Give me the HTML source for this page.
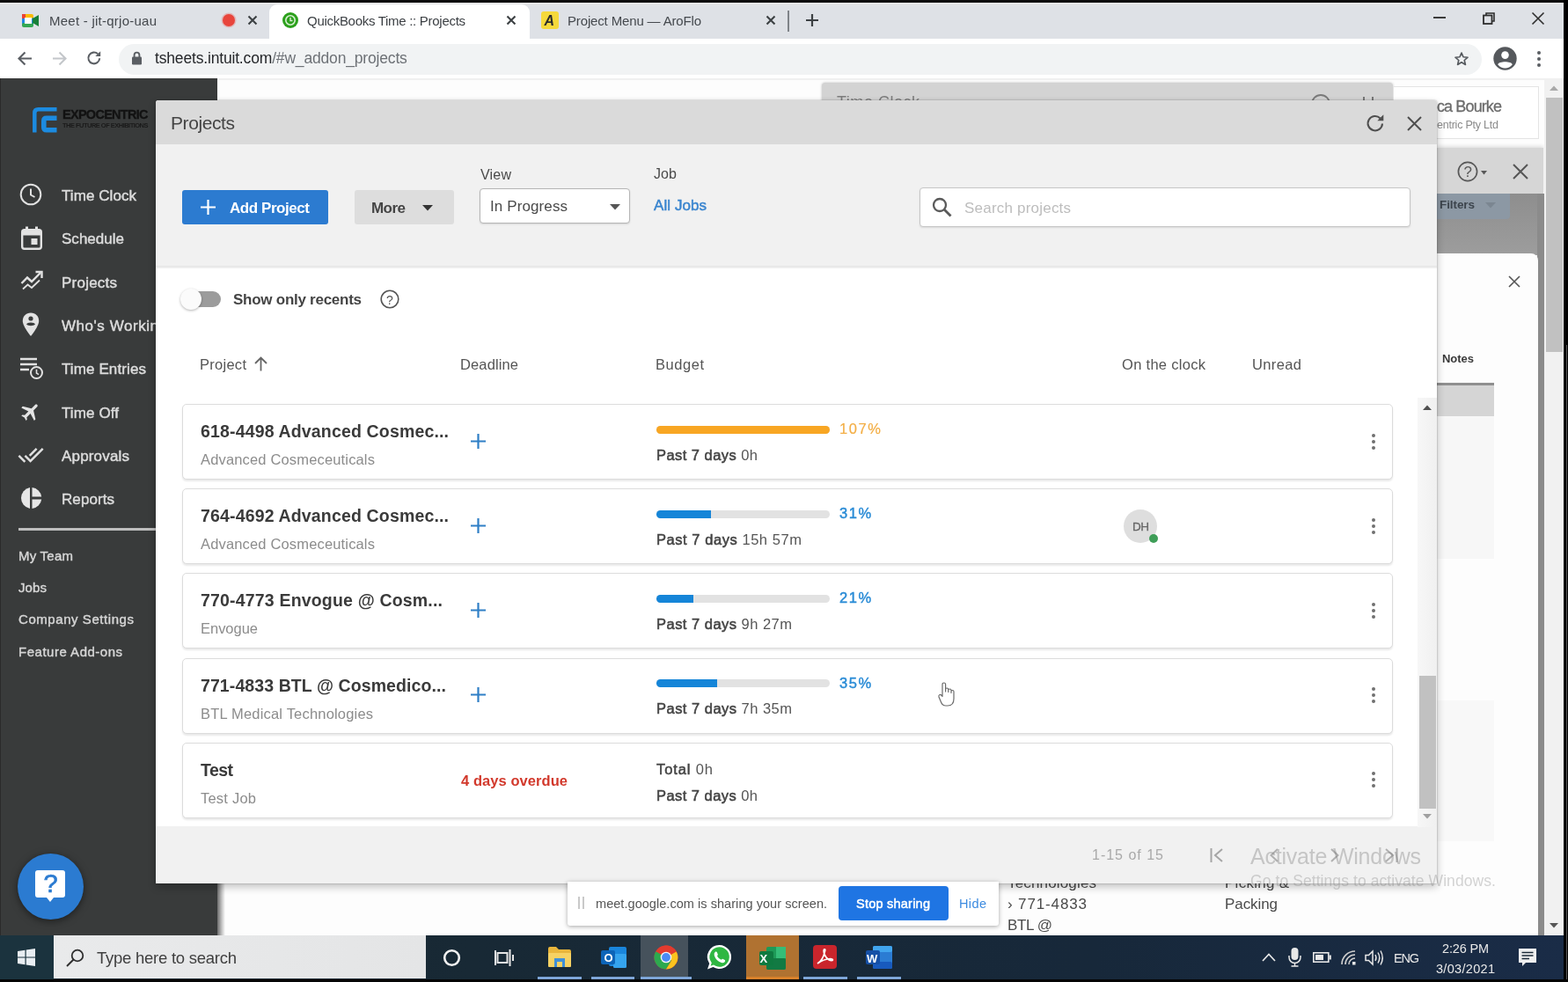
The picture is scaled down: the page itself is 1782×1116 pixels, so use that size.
<!DOCTYPE html>
<html lang="en">
<head>
<meta charset="utf-8">
<title>QuickBooks Time :: Projects</title>
<style>
*{box-sizing:border-box;margin:0;padding:0}
html,body{width:1782px;height:1116px;overflow:hidden;background:#000}
body{font-family:"Liberation Sans",Arial,sans-serif;color:#404040;position:relative}
#screen{position:absolute;left:0;top:0;width:1782px;height:1116px;overflow:hidden;background:#000}
#blur{position:absolute;left:0;top:0;width:1782px;height:1116px;filter:blur(0.7px)}
#screen *{position:absolute}
#screen span.t b,#screen span.t span,#screen span.t i{position:static}
.t{white-space:nowrap;line-height:1}
svg{overflow:visible}
.r{display:block}
</style>
</head>
<body>
<div id="screen"><div id="blur">

<!-- chrome -->
<div class="r" style="left:0;top:0;width:1782px;height:3px;background:#0a0a0a"></div>
<div class="r" style="left:0;top:3px;width:1777px;height:41px;background:#dee1e6"></div>
<div class="r" style="left:0;top:3px;width:1777px;height:5px;background:linear-gradient(#e6e6e6,rgba(222,225,230,0))"></div>
<!-- active tab -->
<div class="r" style="left:306px;top:5px;width:296px;height:39px;background:#fff;border-radius:9px 9px 0 0"></div>
<div class="r" style="left:0;top:44px;width:1777px;height:45px;background:#fff"></div>
<div class="r" style="left:135px;top:50px;width:1549px;height:35px;border-radius:18px;background:#f1f3f4"></div>
<!-- tab 1 : Meet -->
<svg style="left:25px;top:15px" width="20" height="17" viewBox="0 0 20 17">
 <rect x="0" y="3" width="13" height="12" rx="2" fill="#1e88e5"/>
 <rect x="0" y="1" width="13" height="5" rx="2" fill="#fbbc04"/>
 <rect x="0" y="11" width="13" height="5" rx="2" fill="#34a853"/>
 <rect x="0" y="1" width="4" height="5" fill="#ea4335"/>
 <rect x="3" y="5" width="8" height="7" fill="#fff"/>
 <path d="M12 6 L19 2 V15 L12 11Z" fill="#188038"/>
</svg>
<span class="t" style="left:56px;top:15.5px;font-size:15px;letter-spacing:0.25px;color:#45494e">Meet - jit-qrjo-uau</span>
<div class="r" style="left:253px;top:16px;width:14px;height:14px;border-radius:7px;background:#e8453c;box-shadow:0 0 0 1.5px rgba(232,69,60,.25)"></div>
<svg style="left:281px;top:17px" width="12" height="12" viewBox="0 0 12 12"><path d="M1.5 1.5 L10.5 10.5 M10.5 1.5 L1.5 10.5" stroke="#3c4043" stroke-width="2.1" fill="none"/></svg>
<!-- tab 2 : QuickBooks -->
<svg style="left:321px;top:14px" width="18" height="18" viewBox="0 0 18 18"><circle cx="9" cy="9" r="9" fill="#2ca01c"/><circle cx="9" cy="9" r="5.2" fill="none" stroke="#d8f0d4" stroke-width="1.6"/><path d="M9 6 V9.5 H11.5" stroke="#d8f0d4" stroke-width="1.4" fill="none"/></svg>
<span class="t" style="left:349px;top:15.5px;font-size:15px;letter-spacing:-0.29px;color:#3b3f43">QuickBooks Time :: Projects</span>
<svg style="left:575px;top:17px" width="12" height="12" viewBox="0 0 12 12"><path d="M1.5 1.5 L10.5 10.5 M10.5 1.5 L1.5 10.5" stroke="#3c4043" stroke-width="2.1" fill="none"/></svg>
<!-- tab 3 : AroFlo -->
<div class="r" style="left:615px;top:13px;width:20px;height:20px;border-radius:3px;background:#f6d93b"></div>
<span class="t" style="left:618.5px;top:15.5px;font-size:16px;color:#2b2b2b;font-weight:bold;font-style:italic">A</span>
<span class="t" style="left:645px;top:15.5px;font-size:15px;letter-spacing:-0.15px;color:#45494e">Project Menu — AroFlo</span>
<svg style="left:870px;top:17px" width="12" height="12" viewBox="0 0 12 12"><path d="M1.5 1.5 L10.5 10.5 M10.5 1.5 L1.5 10.5" stroke="#3c4043" stroke-width="2.1" fill="none"/></svg>
<div class="r" style="left:895px;top:12px;width:2px;height:24px;background:#7f8388"></div>
<svg style="left:916px;top:16px" width="14" height="14" viewBox="0 0 14 14"><path d="M7 0 V14 M0 7 H14" stroke="#3c4043" stroke-width="2.2" fill="none"/></svg>
<!-- window controls -->
<div class="r" style="left:1629px;top:19px;width:14px;height:2px;background:#3a3a3a"></div>
<svg style="left:1685px;top:14px" width="14" height="14" viewBox="0 0 14 14"><rect x="1" y="3.5" width="9.5" height="9.5" fill="none" stroke="#2d2d2d" stroke-width="1.8"/><path d="M4 3 V1 H13 V10 H11" fill="none" stroke="#2d2d2d" stroke-width="1.6"/></svg>
<svg style="left:1741px;top:14px" width="14" height="14" viewBox="0 0 14 14"><path d="M0.5 0.5 L13.5 13.5 M13.5 0.5 L0.5 13.5" stroke="#2d2d2d" stroke-width="1.6" fill="none"/></svg>
<!-- nav buttons -->
<svg style="left:20px;top:58px" width="17" height="17" viewBox="0 0 17 17"><path d="M16 8.5 H2 M8.5 1.5 L1.5 8.5 L8.5 15.5" stroke="#5a5e63" stroke-width="2.1" fill="none"/></svg>
<svg style="left:59px;top:58px" width="17" height="17" viewBox="0 0 17 17"><path d="M1 8.5 H15 M8.5 1.5 L15.5 8.5 L8.5 15.5" stroke="#c3c6ca" stroke-width="2.1" fill="none"/></svg>
<svg style="left:98px;top:57px" width="18" height="18" viewBox="0 0 18 18"><path d="M15.2 9.3 A6.4 6.4 0 1 1 13.2 4.3" stroke="#5a5e63" stroke-width="2.1" fill="none"/><path d="M16.2 1.2 V7 H10.4Z" fill="#5a5e63"/></svg>
<!-- lock -->
<svg style="left:149px;top:58px" width="13" height="16" viewBox="0 0 13 16"><rect x="1" y="6.5" width="11" height="9" rx="1.2" fill="#5a5e63"/><path d="M3.6 7 V4.5 A2.9 2.9 0 0 1 9.4 4.5 V7" stroke="#5a5e63" stroke-width="1.9" fill="none"/></svg>
<span class="t" style="left:176px;top:58.2px;font-size:17.5px;letter-spacing:-0.17px;color:#25272a">tsheets.intuit.com<span style="color:#6d7176">/#w_addon_projects</span></span>
<!-- star -->
<svg style="left:1652px;top:58px" width="18" height="18" viewBox="0 0 24 24"><path d="M12 2.8 L14.7 9 L21.4 9.6 L16.3 14 L17.9 20.6 L12 17.1 L6.1 20.6 L7.7 14 L2.6 9.6 L9.3 9Z" fill="none" stroke="#55595e" stroke-width="2.2" stroke-linejoin="round"/></svg>
<!-- profile -->
<svg style="left:1697px;top:53px" width="27" height="27" viewBox="0 0 27 27"><circle cx="13.5" cy="13.5" r="13.2" fill="#55585c"/><circle cx="13.5" cy="9.6" r="4.3" fill="#fff"/><path d="M5.2 20.2 C7 16.4 20 16.4 21.8 20.2 C19.5 23.3 16.6 24.4 13.5 24.4 C10.4 24.4 7.5 23.3 5.2 20.2Z" fill="#fff"/></svg>
<div class="r" style="left:1747px;top:58px;width:4px;height:4px;border-radius:2px;background:#5a5e63"></div>
<div class="r" style="left:1747px;top:65px;width:4px;height:4px;border-radius:2px;background:#5a5e63"></div>
<div class="r" style="left:1747px;top:72px;width:4px;height:4px;border-radius:2px;background:#5a5e63"></div>
<!-- right black edge + bottom -->
<div class="r" style="left:1777px;top:0;width:5px;height:1116px;background:#000"></div>
<div class="r" style="left:1780px;top:392px;width:1px;height:724px;background:#5c5c5c"></div>

<!-- page -->
<!-- page base -->
<div class="r" style="left:0;top:89px;width:1777px;height:974px;background:#fdfdfd"></div>
<div class="r" style="left:0;top:89px;width:1777px;height:2px;background:#f0f0f0"></div>
<!-- sidebar -->
<div class="r" style="left:0;top:89px;width:247px;height:974px;background:#393b3b"></div>
<div class="r" style="left:0;top:89px;width:1px;height:974px;background:#2a2a2a"></div>
<div class="r" style="left:247px;top:1003px;width:9px;height:60px;background:linear-gradient(90deg,#6d6d6d,#c9c9c9 60%,#fdfdfd)"></div>
<!-- logo -->
<svg style="left:37px;top:121.5px" width="28" height="29" viewBox="0 0 28 29">
 <path d="M2.300 28.500 V6.500 Q2.300 2.300 6.500 2.300 H27.500" stroke="#1c8be0" stroke-width="4.500" fill="none"/>
 <path d="M27.500 12.200 H15.800 Q12.800 12.200 12.800 15.200 V22.700 Q12.800 25.700 15.800 25.700 H27.500" stroke="#1c8be0" stroke-width="5.600" fill="none"/>
</svg>
<span class="t" style="left:71px;top:122.8px;font-size:14.5px;letter-spacing:-0.72px;color:#121212;font-weight:bold;-webkit-text-stroke:0.3px #121212">EXPOCENTRIC</span>
<span class="t" style="left:71px;top:138.8px;font-size:7.500px;letter-spacing:-0.52px;color:#1a1a1a;font-weight:bold">THE FUTURE OF EXHIBITIONS</span>
<!-- nav icons -->
<svg style="left:22px;top:208px" width="26" height="26" viewBox="0 0 26 26"><circle cx="13" cy="13" r="11.3" fill="none" stroke="#e2e2e2" stroke-width="2"/><path d="M13 6.5 V13.5 L17.5 16" stroke="#e2e2e2" stroke-width="2" fill="none"/></svg>
<svg style="left:24px;top:257px" width="24" height="27" viewBox="0 0 24 27"><rect x="1.2" y="4.2" width="21.6" height="21.6" rx="2.5" fill="none" stroke="#e2e2e2" stroke-width="2.4"/><rect x="1" y="4" width="22" height="6.5" fill="#e2e2e2"/><rect x="5" y="0.5" width="3" height="6" fill="#e2e2e2"/><rect x="16" y="0.5" width="3" height="6" fill="#e2e2e2"/><rect x="11.5" y="14" width="7" height="7" fill="#e2e2e2"/></svg>
<svg style="left:23px;top:307px" width="27" height="24" viewBox="0 0 27 24"><path d="M1.5 15 L8 8.5 L13 13 L23 3" stroke="#e2e2e2" stroke-width="2.4" fill="none"/><path d="M17.5 2 H24.5 V9" stroke="#e2e2e2" stroke-width="2.4" fill="none"/><path d="M3 21.5 L8.5 16.5 L13 20 L22 11.5" stroke="#e2e2e2" stroke-width="1.8" fill="none"/></svg>
<svg style="left:25px;top:355px" width="20" height="28" viewBox="0 0 20 28"><path d="M10 0.5 C4.5 0.5 0.8 4.5 0.8 9.8 C0.8 16 10 27 10 27 C10 27 19.2 16 19.2 9.8 C19.2 4.5 15.5 0.5 10 0.5Z" fill="#e2e2e2"/><circle cx="10" cy="7" r="2.6" fill="#393b3b"/><path d="M5 13.5 C6 10.8 14 10.8 15 13.5 C13 15.8 7 15.8 5 13.5Z" fill="#393b3b"/></svg>
<svg style="left:22px;top:405px" width="28" height="27" viewBox="0 0 28 27"><path d="M1 3 H20 M1 9 H20 M1 15 H11" stroke="#e2e2e2" stroke-width="2.4" fill="none"/><circle cx="19.5" cy="18.5" r="6.5" fill="none" stroke="#e2e2e2" stroke-width="2"/><path d="M19.5 14.8 V19 L22 20.6" stroke="#e2e2e2" stroke-width="1.6" fill="none"/></svg>
<svg style="left:22px;top:455px" width="26" height="26" viewBox="0 0 24 24"><g transform="rotate(45 12 12)"><path d="M21 16v-2l-8-5V3.500c0-.830-.670-1.500-1.500-1.500S10 2.670 10 3.500V9l-8 5v2l8-2.500V19l-2 1.500V22l3.500-1 3.500 1v-1.500L13 19v-5.500l8 2.500z" fill="#e4e4e4"/></g></svg>
<svg style="left:20px;top:502px" width="30" height="30" viewBox="0 0 24 24"><path d="M18 7l-1.410-1.410-6.340 6.340 1.410 1.410L18 7zm4.240-1.410L11.660 16.170 7.480 12l-1.410 1.410L11.660 19l12-12-1.420-1.410zM.410 13.410L6 19l1.410-1.410L1.830 12 .410 13.410z" fill="#e0e0e0"/></svg>
<svg style="left:22px;top:553px" width="26" height="26" viewBox="0 0 26 26"><path d="M12 1 A12.2 12.2 0 0 0 12 25Z" fill="#e6e6e6"/><path d="M14.5 1 A12.2 12.2 0 0 1 25.2 11.6 H14.5Z" fill="#e6e6e6"/><path d="M14.5 14.4 H25.2 A12.2 12.2 0 0 1 14.5 25Z" fill="#e6e6e6"/></svg>
<!-- nav labels -->
<span class="t" style="left:70px;top:213.5px;font-size:17px;letter-spacing:0.07px;color:#dcdcdc;-webkit-text-stroke:0.45px #dcdcdc">Time Clock</span>
<span class="t" style="left:70px;top:262.5px;font-size:17px;letter-spacing:0.02px;color:#dcdcdc;-webkit-text-stroke:0.45px #dcdcdc">Schedule</span>
<span class="t" style="left:70px;top:312.5px;font-size:17px;letter-spacing:0.23px;color:#dcdcdc;-webkit-text-stroke:0.45px #dcdcdc">Projects</span>
<span class="t" style="left:70px;top:361.5px;font-size:17px;letter-spacing:0.54px;color:#dcdcdc;-webkit-text-stroke:0.45px #dcdcdc">Who's Working</span>
<span class="t" style="left:70px;top:410.5px;font-size:17px;letter-spacing:0.11px;color:#dcdcdc;-webkit-text-stroke:0.45px #dcdcdc">Time Entries</span>
<span class="t" style="left:70px;top:460.5px;font-size:17px;letter-spacing:0.11px;color:#dcdcdc;-webkit-text-stroke:0.45px #dcdcdc">Time Off</span>
<span class="t" style="left:70px;top:509.5px;font-size:17px;letter-spacing:0.17px;color:#dcdcdc;-webkit-text-stroke:0.45px #dcdcdc">Approvals</span>
<span class="t" style="left:70px;top:558.5px;font-size:17px;letter-spacing:0.08px;color:#dcdcdc;-webkit-text-stroke:0.45px #dcdcdc">Reports</span>
<div class="r" style="left:21px;top:600px;width:226px;height:3px;background:#bdbdbd"></div>
<span class="t" style="left:21px;top:624.0px;font-size:15px;letter-spacing:0.24px;color:#d6d6d6;-webkit-text-stroke:0.4px #d6d6d6">My Team</span>
<span class="t" style="left:21px;top:660.0px;font-size:15px;letter-spacing:0.10px;color:#d6d6d6;-webkit-text-stroke:0.4px #d6d6d6">Jobs</span>
<span class="t" style="left:21px;top:696.0px;font-size:15px;letter-spacing:0.56px;color:#d6d6d6;-webkit-text-stroke:0.4px #d6d6d6">Company Settings</span>
<span class="t" style="left:21px;top:733.0px;font-size:15px;letter-spacing:0.51px;color:#d6d6d6;-webkit-text-stroke:0.4px #d6d6d6">Feature Add-ons</span>
<!-- help bubble -->
<div class="r" style="left:20px;top:970px;width:75px;height:75px;border-radius:38px;background:#2b7bd1;box-shadow:0 2px 8px rgba(0,0,0,.5)"></div>
<svg style="left:40px;top:989px" width="34" height="40" viewBox="0 0 34 40"><path d="M3 0 H31 Q34 0 34 3 V28 Q34 31 31 31 H21 L17 36 L13 31 H3 Q0 31 0 28 V3 Q0 0 3 0Z" fill="#fff"/></svg>
<span class="t" style="left:49.5px;top:990.0px;font-size:29px;color:#2b7bd1;-webkit-text-stroke:0.7px #2b7bd1">?</span>

<!-- ===== background page, right of sidebar ===== -->
<!-- Time Clock panel header peeking above modal -->
<div class="r" style="left:934px;top:94px;width:649px;height:80px;background:#d3d3d3;border-radius:4px 4px 0 0;box-shadow:0 0 3px rgba(0,0,0,.25)"></div>
<span class="t" style="left:951px;top:107.0px;font-size:18px;letter-spacing:0.52px;color:#7d7d7d">Time Clock</span>
<svg style="left:1490px;top:107px" width="22" height="22" viewBox="0 0 22 22"><circle cx="11" cy="11" r="10" fill="none" stroke="#7a7a7a" stroke-width="1.8"/></svg>
<div class="r" style="left:1549px;top:110px;width:2px;height:12px;background:#777"></div>
<div class="r" style="left:1559px;top:110px;width:2px;height:12px;background:#777"></div>
<!-- user card -->
<div class="r" style="left:1583px;top:98px;width:166px;height:60px;background:#fff;border:1px solid #e4e4e4"></div>
<span class="t" style="left:1633px;top:112.0px;font-size:18px;letter-spacing:-0.88px;color:#6c6c6c;-webkit-text-stroke:0.3px #6c6c6c">ca Bourke</span>
<span class="t" style="left:1633px;top:135.8px;font-size:12.5px;letter-spacing:-0.23px;color:#8a8a8a">entric Pty Ltd</span>
<!-- right panel header -->
<div class="r" style="left:1633px;top:168px;width:121px;height:52px;background:#d6d6d6;box-shadow:0 -2px 4px rgba(0,0,0,.12)"></div>
<svg style="left:1656px;top:183px" width="24" height="24" viewBox="0 0 24 24"><circle cx="12" cy="12" r="10.6" fill="none" stroke="#585858" stroke-width="1.7"/></svg>
<span class="t" style="left:1663.5px;top:187.0px;font-size:17px;color:#585858">?</span>
<svg style="left:1683px;top:194px" width="7" height="5" viewBox="0 0 7 5"><path d="M0 0 H7 L3.5 4.5Z" fill="#585858"/></svg>
<svg style="left:1719px;top:186px" width="18" height="18" viewBox="0 0 18 18"><path d="M1 1 L17 17 M17 1 L1 17" stroke="#555" stroke-width="2" fill="none"/></svg>
<!-- dim area under header -->
<div class="r" style="left:1633px;top:220px;width:121px;height:70px;background:linear-gradient(#8e8e8e,#9d9d9d)"></div>
<div class="r" style="left:1633px;top:220px;width:83px;height:29px;background:#8c98a4;border-radius:0 0 4px 0"></div>
<span class="t" style="left:1636px;top:226.2px;font-size:13.5px;letter-spacing:-0.09px;color:#3c444c;font-weight:bold">Filters</span>
<svg style="left:1688px;top:230px" width="12" height="7" viewBox="0 0 12 7"><path d="M0 0 H12 L6 6.5Z" fill="#7b8691"/></svg>
<!-- white side panel -->
<div class="r" style="left:1747px;top:220px;width:8px;height:843px;background:#8b8b8b"></div>
<div class="r" style="left:1633px;top:288px;width:115px;height:775px;background:#fdfdfd;border-radius:0 8px 0 0"></div>
<svg style="left:1714px;top:313px" width="14" height="14" viewBox="0 0 14 14"><path d="M1 1 L13 13 M13 1 L1 13" stroke="#555" stroke-width="1.6" fill="none"/></svg>
<span class="t" style="left:1639px;top:400.5px;font-size:13px;letter-spacing:-0.03px;color:#3a3a3a;font-weight:bold">Notes</span>
<div class="r" style="left:1633px;top:435px;width:65px;height:3px;background:#8f8f8f"></div>
<div class="r" style="left:1633px;top:438px;width:65px;height:35px;background:#d5d5d5"></div>
<div class="r" style="left:1633px;top:473px;width:65px;height:162px;background:#f7f7f7"></div>
<div class="r" style="left:1633px;top:796px;width:65px;height:160px;background:#f8f8f8"></div>
<!-- page scrollbar -->
<div class="r" style="left:1755px;top:91px;width:22px;height:972px;background:#f1f1f1"></div>
<div class="r" style="left:1757px;top:111px;width:19px;height:289px;background:#c1c1c1"></div>
<svg style="left:1761px;top:97px" width="10" height="6" viewBox="0 0 10 6"><path d="M0 6 L5 0.5 L10 6Z" fill="#a9a9a9"/></svg>
<svg style="left:1761px;top:1049px" width="10" height="6" viewBox="0 0 10 6"><path d="M0 0 L5 5.5 L10 0Z" fill="#555"/></svg>
<!-- page text under modal -->
<span class="t" style="left:1145px;top:994.5px;font-size:17px;letter-spacing:0.16px;color:#4a4a4a">Technologies</span>
<span class="t" style="left:1145px;top:1018.5px;font-size:17px;letter-spacing:0.86px;color:#4a4a4a">› 771-4833</span>
<span class="t" style="left:1145px;top:1042.5px;font-size:17px;letter-spacing:-0.38px;color:#4a4a4a">BTL @</span>
<span class="t" style="left:1392px;top:994.5px;font-size:17px;letter-spacing:0.27px;color:#4a4a4a">Picking &amp;</span>
<span class="t" style="left:1392px;top:1018.5px;font-size:17px;letter-spacing:-0.08px;color:#4a4a4a">Packing</span>

<!-- modal -->
<!-- modal shell -->
<div class="r" style="left:177px;top:114px;width:1456px;height:890px;background:#fff;border-radius:3px 3px 0 0;box-shadow:0 4px 10px rgba(0,0,0,.24),0 0 2px rgba(0,0,0,.35)"></div>
<div class="r" style="left:177px;top:114px;width:1456px;height:50px;background:#dadada;border-radius:3px 3px 0 0"></div>
<div class="r" style="left:177px;top:164px;width:1456px;height:140px;background:#f1f1f1"></div>
<div class="r" style="left:177px;top:302px;width:1456px;height:3px;background:linear-gradient(#e4e4e4,#f3f3f3)"></div>
<div class="r" style="left:177px;top:939px;width:1456px;height:65px;background:#f1f1f1"></div>
<span class="t" style="left:194px;top:128.5px;font-size:21px;letter-spacing:-0.41px;color:#444">Projects</span>
<svg style="left:1552px;top:129px" width="22" height="22" viewBox="0 0 22 22"><path d="M19 11.5 A8.2 8.2 0 1 1 16.6 5.4" stroke="#4f4f4f" stroke-width="2.1" fill="none"/><path d="M20.3 1.2 V8.2 H13.3Z" fill="#4f4f4f"/></svg>
<svg style="left:1599px;top:132px" width="17" height="17" viewBox="0 0 17 17"><path d="M1 1 L16 16 M16 1 L1 16" stroke="#4f4f4f" stroke-width="2" fill="none"/></svg>
<div class="r" style="left:207px;top:216px;width:166px;height:39px;background:#2c7bd0;border-radius:3px"></div>
<svg style="left:228px;top:227px" width="17" height="17" viewBox="0 0 17 17"><path d="M8.5 0 V17 M0 8.5 H17" stroke="#fff" stroke-width="2.2" fill="none"/></svg>
<span class="t" style="left:261px;top:227.5px;font-size:17px;letter-spacing:-0.44px;color:#fff;font-weight:bold">Add Project</span>
<div class="r" style="left:403px;top:216px;width:113px;height:39px;background:#dddddd;border-radius:3px"></div>
<span class="t" style="left:422px;top:227.5px;font-size:17px;letter-spacing:-0.54px;color:#444;font-weight:bold">More</span>
<svg style="left:480px;top:233px" width="12" height="7" viewBox="0 0 12 7"><path d="M0 0 H12 L6 6.5Z" fill="#333"/></svg>
<span class="t" style="left:546px;top:191.0px;font-size:16px;letter-spacing:0.20px;color:#4a4a4a">View</span>
<div class="r" style="left:545px;top:214px;width:171px;height:40px;background:#fff;border:1px solid #b5b5b5;border-radius:4px;box-shadow:0 1px 2px rgba(0,0,0,.12)"></div>
<span class="t" style="left:557px;top:225.5px;font-size:17px;letter-spacing:0.11px;color:#4a4a4a">In Progress</span>
<svg style="left:693px;top:232px" width="12" height="7" viewBox="0 0 12 7"><path d="M0 0 H12 L6 6.5Z" fill="#555"/></svg>
<span class="t" style="left:743px;top:190.0px;font-size:16px;letter-spacing:0.10px;color:#4a4a4a">Job</span>
<span class="t" style="left:743px;top:224.5px;font-size:17px;letter-spacing:0.07px;color:#3a85cf;-webkit-text-stroke:0.5px #3a85cf">All Jobs</span>
<div class="r" style="left:1045px;top:213px;width:558px;height:45px;background:#fff;border:1px solid #c6c6c6;border-radius:4px;box-shadow:0 1px 2px rgba(0,0,0,.10)"></div>
<svg style="left:1059px;top:224px" width="23" height="23" viewBox="0 0 23 23"><circle cx="9" cy="9" r="7" fill="none" stroke="#5a5a5a" stroke-width="2.3"/><path d="M14 14 L21.5 21.5" stroke="#5a5a5a" stroke-width="2.8" fill="none"/></svg>
<span class="t" style="left:1096px;top:227.5px;font-size:17px;letter-spacing:0.21px;color:#bdbdbd">Search projects</span>
<div class="r" style="left:222px;top:331px;width:29px;height:18px;background:#9c9c9c;border-radius:2px 9px 9px 2px"></div>
<div class="r" style="left:205px;top:328px;width:24px;height:24px;background:#fbfbfb;border-radius:12px;box-shadow:0 1px 3px rgba(0,0,0,.3)"></div>
<span class="t" style="left:265px;top:331.5px;font-size:17px;letter-spacing:-0.26px;color:#444;font-weight:bold">Show only recents</span>
<svg style="left:432px;top:329px" width="22" height="22" viewBox="0 0 22 22"><circle cx="11" cy="11" r="9.8" fill="none" stroke="#555" stroke-width="1.6"/></svg>
<span class="t" style="left:439px;top:333.5px;font-size:14px;color:#555">?</span>
<span class="t" style="left:227px;top:405.8px;font-size:16.5px;letter-spacing:0.27px;color:#555">Project</span>
<svg style="left:289px;top:405px" width="15" height="17" viewBox="0 0 15 17"><path d="M7.5 16.5 V2 M1 8 L7.5 1.5 L14 8" stroke="#666" stroke-width="1.8" fill="none"/></svg>
<span class="t" style="left:523px;top:405.8px;font-size:16.5px;letter-spacing:0.12px;color:#555">Deadline</span>
<span class="t" style="left:745px;top:405.8px;font-size:16.5px;letter-spacing:0.54px;color:#555">Budget</span>
<span class="t" style="left:1275px;top:405.8px;font-size:16.5px;letter-spacing:0.30px;color:#555">On the clock</span>
<span class="t" style="left:1423px;top:405.8px;font-size:16.5px;letter-spacing:0.38px;color:#555">Unread</span>
<div class="r" style="left:207px;top:459px;width:1376px;height:86px;background:#fff;border:1px solid #dcdcdc;border-radius:5px;box-shadow:0 2px 2px rgba(0,0,0,.09)"></div>
<span class="t" style="left:228px;top:480.9px;font-size:19.500px;letter-spacing:0.16px;color:#3a3a3a;font-weight:bold">618-4498 Advanced Cosmec...</span>
<span class="t" style="left:228px;top:514.0px;font-size:16.500px;letter-spacing:0.16px;color:#8c8c8c">Advanced Cosmeceuticals</span>
<svg style="left:535px;top:492.5px" width="17" height="17" viewBox="0 0 17 17"><path d="M8.500 0 V17 M0 8.500 H17" stroke="#2f7fc6" stroke-width="2.200" fill="none"/></svg>
<div class="r" style="left:746px;top:483.5px;width:197px;height:9px;background:#e2e2e2;border-radius:5px"></div>
<div class="r" style="left:746px;top:483.5px;width:197px;height:9px;background:#f8a623;border-radius:5px"></div>
<span class="t" style="left:954px;top:479.2px;font-size:16.5px;letter-spacing:1.60px;color:#f3ae45;-webkit-text-stroke:0.2px #f3ae45">107%</span>
<span class="t" style="left:746px;top:508.8px;font-size:16.5px;letter-spacing:0.45px;color:#555"><b style="color:#444;font-weight:normal;-webkit-text-stroke:0.55px #444">Past 7 days</b> 0h</span>
<div class="r" style="left:1559px;top:492.5px;width:4px;height:4px;border-radius:2px;background:#707070"></div>
<div class="r" style="left:1559px;top:499.5px;width:4px;height:4px;border-radius:2px;background:#707070"></div>
<div class="r" style="left:1559px;top:506.5px;width:4px;height:4px;border-radius:2px;background:#707070"></div>
<div class="r" style="left:207px;top:555px;width:1376px;height:86px;background:#fff;border:1px solid #dcdcdc;border-radius:5px;box-shadow:0 2px 2px rgba(0,0,0,.09)"></div>
<span class="t" style="left:228px;top:577.0px;font-size:19.500px;letter-spacing:0.16px;color:#3a3a3a;font-weight:bold">764-4692 Advanced Cosmec...</span>
<span class="t" style="left:228px;top:610.0px;font-size:16.500px;letter-spacing:0.16px;color:#8c8c8c">Advanced Cosmeceuticals</span>
<svg style="left:535px;top:588.5px" width="17" height="17" viewBox="0 0 17 17"><path d="M8.500 0 V17 M0 8.500 H17" stroke="#2f7fc6" stroke-width="2.200" fill="none"/></svg>
<div class="r" style="left:746px;top:579.5px;width:197px;height:9px;background:#e2e2e2;border-radius:5px"></div>
<div class="r" style="left:746px;top:579.5px;width:62px;height:9px;background:#1585d8;border-radius:5px 0 0 5px"></div>
<span class="t" style="left:954px;top:575.2px;font-size:16.5px;letter-spacing:1.60px;color:#2b8cd6;-webkit-text-stroke:0.45px #2b8cd6">31%</span>
<span class="t" style="left:746px;top:604.8px;font-size:16.5px;letter-spacing:0.55px;color:#555"><b style="color:#444;font-weight:normal;-webkit-text-stroke:0.55px #444">Past 7 days</b> 15h 57m</span>
<div class="r" style="left:1277px;top:579px;width:38px;height:38px;border-radius:19px;background:#dedede"></div>
<span class="t" style="left:1287px;top:591.8px;font-size:13.500px;letter-spacing:-0.50px;color:#666;-webkit-text-stroke:0.3px #666">DH</span>
<div class="r" style="left:1306px;top:607px;width:10px;height:10px;border-radius:5px;background:#3f9e58"></div>
<div class="r" style="left:1559px;top:588.5px;width:4px;height:4px;border-radius:2px;background:#707070"></div>
<div class="r" style="left:1559px;top:595.5px;width:4px;height:4px;border-radius:2px;background:#707070"></div>
<div class="r" style="left:1559px;top:602.5px;width:4px;height:4px;border-radius:2px;background:#707070"></div>
<div class="r" style="left:207px;top:651px;width:1376px;height:86px;background:#fff;border:1px solid #dcdcdc;border-radius:5px;box-shadow:0 2px 2px rgba(0,0,0,.09)"></div>
<span class="t" style="left:228px;top:673.0px;font-size:19.500px;letter-spacing:0.18px;color:#3a3a3a;font-weight:bold">770-4773 Envogue @ Cosm...</span>
<span class="t" style="left:228px;top:706.0px;font-size:16.500px;letter-spacing:-0.02px;color:#8c8c8c">Envogue</span>
<svg style="left:535px;top:684.5px" width="17" height="17" viewBox="0 0 17 17"><path d="M8.500 0 V17 M0 8.500 H17" stroke="#2f7fc6" stroke-width="2.200" fill="none"/></svg>
<div class="r" style="left:746px;top:675.5px;width:197px;height:9px;background:#e2e2e2;border-radius:5px"></div>
<div class="r" style="left:746px;top:675.5px;width:42px;height:9px;background:#1585d8;border-radius:5px 0 0 5px"></div>
<span class="t" style="left:954px;top:671.2px;font-size:16.5px;letter-spacing:1.60px;color:#2b8cd6;-webkit-text-stroke:0.45px #2b8cd6">21%</span>
<span class="t" style="left:746px;top:700.8px;font-size:16.5px;letter-spacing:0.48px;color:#555"><b style="color:#444;font-weight:normal;-webkit-text-stroke:0.55px #444">Past 7 days</b> 9h 27m</span>
<div class="r" style="left:1559px;top:684.5px;width:4px;height:4px;border-radius:2px;background:#707070"></div>
<div class="r" style="left:1559px;top:691.5px;width:4px;height:4px;border-radius:2px;background:#707070"></div>
<div class="r" style="left:1559px;top:698.5px;width:4px;height:4px;border-radius:2px;background:#707070"></div>
<div class="r" style="left:207px;top:747.5px;width:1376px;height:86px;background:#fff;border:1px solid #dcdcdc;border-radius:5px;box-shadow:0 2px 2px rgba(0,0,0,.09)"></div>
<span class="t" style="left:228px;top:769.5px;font-size:19.500px;letter-spacing:0.09px;color:#3a3a3a;font-weight:bold">771-4833 BTL @ Cosmedico...</span>
<span class="t" style="left:228px;top:802.5px;font-size:16.500px;letter-spacing:0.19px;color:#8c8c8c">BTL Medical Technologies</span>
<svg style="left:535px;top:781px" width="17" height="17" viewBox="0 0 17 17"><path d="M8.500 0 V17 M0 8.500 H17" stroke="#2f7fc6" stroke-width="2.200" fill="none"/></svg>
<div class="r" style="left:746px;top:772.0px;width:197px;height:9px;background:#e2e2e2;border-radius:5px"></div>
<div class="r" style="left:746px;top:772.0px;width:69px;height:9px;background:#1585d8;border-radius:5px 0 0 5px"></div>
<span class="t" style="left:954px;top:767.8px;font-size:16.5px;letter-spacing:1.60px;color:#2b8cd6;-webkit-text-stroke:0.45px #2b8cd6">35%</span>
<span class="t" style="left:746px;top:797.2px;font-size:16.5px;letter-spacing:0.48px;color:#555"><b style="color:#444;font-weight:normal;-webkit-text-stroke:0.55px #444">Past 7 days</b> 7h 35m</span>
<div class="r" style="left:1559px;top:781.0px;width:4px;height:4px;border-radius:2px;background:#707070"></div>
<div class="r" style="left:1559px;top:788.0px;width:4px;height:4px;border-radius:2px;background:#707070"></div>
<div class="r" style="left:1559px;top:795.0px;width:4px;height:4px;border-radius:2px;background:#707070"></div>
<div class="r" style="left:207px;top:843.5px;width:1376px;height:86px;background:#fff;border:1px solid #dcdcdc;border-radius:5px;box-shadow:0 2px 2px rgba(0,0,0,.09)"></div>
<span class="t" style="left:228px;top:865.5px;font-size:19.500px;letter-spacing:-0.55px;color:#3a3a3a;font-weight:bold">Test</span>
<span class="t" style="left:228px;top:898.5px;font-size:16.500px;letter-spacing:0.22px;color:#8c8c8c">Test Job</span>
<span class="t" style="left:524px;top:878.8px;font-size:16.5px;letter-spacing:0.07px;color:#d2392c;font-weight:bold">4 days overdue</span>
<span class="t" style="left:746px;top:866.2px;font-size:16.5px;letter-spacing:0.89px;color:#555"><b style="color:#444;font-weight:normal;-webkit-text-stroke:0.55px #444">Total</b> 0h</span>
<span class="t" style="left:746px;top:896.2px;font-size:16.5px;letter-spacing:0.45px;color:#555"><b style="color:#444;font-weight:normal;-webkit-text-stroke:0.55px #444">Past 7 days</b> 0h</span>
<div class="r" style="left:1559px;top:877.0px;width:4px;height:4px;border-radius:2px;background:#707070"></div>
<div class="r" style="left:1559px;top:884.0px;width:4px;height:4px;border-radius:2px;background:#707070"></div>
<div class="r" style="left:1559px;top:891.0px;width:4px;height:4px;border-radius:2px;background:#707070"></div>
<div class="r" style="left:1611px;top:452px;width:22px;height:488px;background:linear-gradient(90deg,#f7f7f7,#f0f0f0)"></div>
<svg style="left:1617px;top:460px" width="10" height="6" viewBox="0 0 10 6"><path d="M0 6 L5 0.5 L10 6Z" fill="#505050"/></svg>
<div class="r" style="left:1613px;top:768px;width:19px;height:151px;background:#c1c1c1"></div>
<svg style="left:1617px;top:925px" width="10" height="6" viewBox="0 0 10 6"><path d="M0 0 L5 5.5 L10 0Z" fill="#a0a0a0"/></svg>
<span class="t" style="left:1241px;top:964.0px;font-size:16px;letter-spacing:0.99px;color:#a9a9a9">1-15 of 15</span>
<svg style="left:1375px;top:964px" width="16" height="16" viewBox="0 0 16 16"><path d="M1.5 0 V16 M14 1 L6 8 L14 15" stroke="#a5a5a5" stroke-width="2" fill="none"/></svg>
<svg style="left:1443px;top:964px" width="10" height="16" viewBox="0 0 10 16"><path d="M9 1 L1.5 8 L9 15" stroke="#b0b0b0" stroke-width="2" fill="none"/></svg>
<svg style="left:1512px;top:964px" width="10" height="16" viewBox="0 0 10 16"><path d="M1 1 L8.5 8 L1 15" stroke="#b0b0b0" stroke-width="2" fill="none"/></svg>
<svg style="left:1573px;top:964px" width="16" height="16" viewBox="0 0 16 16"><path d="M14.5 0 V16 M2 1 L10 8 L2 15" stroke="#b0b0b0" stroke-width="2" fill="none"/></svg>

<!-- share -->
<div class="r" style="left:645px;top:1002px;width:490px;height:50px;background:#fff;border-radius:0 0 3px 3px;box-shadow:0 1px 5px rgba(0,0,0,.35)"></div>
<div class="r" style="left:657px;top:1019px;width:2px;height:14px;background:#c9c9c9"></div>
<div class="r" style="left:662px;top:1019px;width:2px;height:14px;background:#c9c9c9"></div>
<span class="t" style="left:677px;top:1019.5px;font-size:14.500px;letter-spacing:0.05px;color:#555">meet.google.com is sharing your screen.</span>
<div class="r" style="left:953px;top:1007px;width:125px;height:39px;background:#1f75e3;border-radius:4px"></div>
<span class="t" style="left:973px;top:1019.5px;font-size:14.500px;letter-spacing:0.23px;color:#fff;-webkit-text-stroke:0.5px #fff">Stop sharing</span>
<span class="t" style="left:1090px;top:1019.5px;font-size:14.500px;letter-spacing:0.39px;color:#3d8be0">Hide</span>

<!-- taskbar -->
<div class="r" style="left:0;top:1063px;width:1777px;height:50px;background:linear-gradient(90deg,#16262f 0%,#182935 30%,#17283a 70%,#1a2c47 100%)"></div>
<div class="r" style="left:0;top:1113px;width:1782px;height:3px;background:#050505"></div>
<!-- start -->
<div class="r" style="left:0;top:1063px;width:61px;height:50px;background:#1b333e"></div>
<svg style="left:20px;top:1078px" width="20" height="20" viewBox="0 0 20 20"><path d="M0 3 L8.5 1.8 V9.5 H0Z M9.7 1.6 L20 0 V9.5 H9.7Z M0 10.6 H8.5 V18.3 L0 17.1Z M9.7 10.6 H20 V20 L9.7 18.5Z" fill="#e9eef2"/></svg>
<!-- search -->
<div class="r" style="left:61px;top:1063px;width:423px;height:49px;background:linear-gradient(90deg,#e9eaeb,#e4e5e6)"></div>
<svg style="left:75px;top:1078px" width="21" height="21" viewBox="0 0 21 21"><circle cx="13" cy="8" r="6.3" fill="none" stroke="#2f2f2f" stroke-width="1.8"/><path d="M8.5 12.5 L1 20" stroke="#2f2f2f" stroke-width="1.9" fill="none"/></svg>
<span class="t" style="left:110px;top:1079.8px;font-size:18.5px;letter-spacing:-0.25px;color:#3f3f3f">Type here to search</span>
<!-- cortana / task view -->
<svg style="left:503px;top:1078px" width="21" height="21" viewBox="0 0 21 21"><circle cx="10.5" cy="10.5" r="8.3" fill="none" stroke="#f2f2f2" stroke-width="2.6"/></svg>
<svg style="left:562px;top:1078px" width="22" height="21" viewBox="0 0 22 21"><rect x="3.5" y="5" width="11" height="11" fill="none" stroke="#e6e6e6" stroke-width="2"/><path d="M1 2 V19 M17.5 1 V20 M21 7 V14" stroke="#e6e6e6" stroke-width="2" fill="none"/></svg>
<!-- app icons -->
<div class="r" style="left:728px;top:1063px;width:54px;height:50px;background:#46525c"></div>
<div class="r" style="left:848px;top:1063px;width:60px;height:50px;background:#b07231"></div>
<div class="r" style="left:611px;top:1110px;width:50px;height:3px;background:#7ea6d8"></div>
<div class="r" style="left:672px;top:1110px;width:49px;height:3px;background:#7ea6d8"></div>
<div class="r" style="left:728px;top:1110px;width:58px;height:3px;background:#7ea6d8"></div>
<div class="r" style="left:848px;top:1110px;width:60px;height:3px;background:#d9822b"></div>
<div class="r" style="left:913px;top:1110px;width:50px;height:3px;background:#7ea6d8"></div>
<div class="r" style="left:974px;top:1110px;width:50px;height:3px;background:#7ea6d8"></div>
<!-- file explorer -->
<svg style="left:622px;top:1075px" width="28" height="25" viewBox="0 0 28 25"><path d="M1 3 Q1 1 3 1 H10 L13 4 H25 Q27 4 27 6 V23 H1Z" fill="#e9b63c"/><rect x="1" y="8" width="26" height="16" rx="1" fill="#f6d264"/><rect x="8" y="14" width="12" height="10" fill="#3f8fd8"/><rect x="11" y="18" width="6" height="6" fill="#f6d264"/></svg>
<!-- outlook -->
<svg style="left:683px;top:1075px" width="30" height="26" viewBox="0 0 30 26"><rect x="9" y="1" width="20" height="22" rx="2" fill="#1a86dc"/><rect x="14" y="9" width="15" height="16" rx="1.5" fill="#35a4ee"/><rect x="0" y="5" width="16" height="16" rx="2" fill="#0c64b8"/></svg>
<span class="t" style="left:686.5px;top:1081.5px;font-size:13px;color:#fff;font-weight:bold">O</span>
<!-- chrome -->
<svg style="left:743px;top:1074px" width="28" height="28" viewBox="0 0 28 28"><circle cx="14" cy="14" r="13.5" fill="#e33b2e"/><path d="M14 14 L2.3 7.2 A13.5 13.5 0 0 0 14 27.5 L20 17.5Z" fill="#2da94f"/><path d="M14 14 L25.7 7.5 A13.5 13.5 0 0 1 14 27.5 L20.2 17.4Z" fill="#fcc31e"/><path d="M2.3 7.3 A13.5 13.5 0 0 1 25.7 7.3 L14 8Z" fill="#e33b2e"/><circle cx="14" cy="14" r="6.3" fill="#f4f4f4"/><circle cx="14" cy="14" r="4.9" fill="#4a8af4"/></svg>
<!-- whatsapp -->
<svg style="left:803px;top:1073px" width="29" height="30" viewBox="0 0 29 30"><path d="M14.5 1 A13.5 13.5 0 1 1 7.5 26 L1 28.5 L3.2 22 A13.5 13.5 0 0 1 14.5 1Z" fill="#fff"/><path d="M14.5 3.3 A11.2 11.2 0 1 1 8 23.5 L4.6 24.8 L5.8 21.3 A11.2 11.2 0 0 1 14.5 3.3Z" fill="#2fb742"/><path d="M10 8.5 Q11.5 8 12 9.5 L12.8 11.8 Q13 12.6 12 13.4 Q13.5 16.5 16.8 17.8 Q17.6 16.6 18.4 16.8 L20.8 18 Q21.6 18.6 20.8 20 Q19.4 21.8 16.8 21 Q10.8 19 8.8 13 Q8 10 10 8.5Z" fill="#fff"/></svg>
<!-- excel -->
<svg style="left:863px;top:1076px" width="30" height="26" viewBox="0 0 30 26"><rect x="8" y="0" width="22" height="26" rx="2" fill="#1e9a57"/><rect x="8" y="13" width="22" height="13" rx="2" fill="#127a43"/><rect x="19" y="0" width="11" height="13" fill="#35bd77"/><rect x="0" y="5" width="16" height="16" rx="2" fill="#0f7a40"/></svg>
<span class="t" style="left:863.5px;top:1082.5px;font-size:13px;color:#fff;font-weight:bold">X</span>
<!-- acrobat -->
<div class="r" style="left:924px;top:1074px;width:27px;height:27px;border-radius:4px;background:#c9252c"></div>
<svg style="left:927px;top:1077px" width="21" height="21" viewBox="0 0 21 21"><path d="M2 18 Q8 15 10.5 4 Q11.5 1.5 9.5 2 Q8 5 12 11 Q15 15 19 14.5 Q20.5 13 17 12.5 Q9 13 2 18Z" stroke="#fff" stroke-width="1.7" fill="none"/></svg>
<!-- word -->
<svg style="left:984px;top:1075px" width="30" height="26" viewBox="0 0 30 26"><rect x="8" y="0" width="22" height="26" rx="2" fill="#2b7cd3"/><rect x="8" y="0" width="22" height="7" rx="2" fill="#41a5ee"/><rect x="8" y="18" width="22" height="8" rx="2" fill="#185abd"/><rect x="0" y="5" width="16" height="16" rx="2" fill="#1650a6"/></svg>
<span class="t" style="left:985px;top:1082.5px;font-size:13px;color:#fff;font-weight:bold">W</span>
<!-- tray -->
<svg style="left:1434px;top:1083px" width="16" height="10" viewBox="0 0 16 10"><path d="M1 9 L8 1.5 L15 9" stroke="#e8e8e8" stroke-width="1.7" fill="none"/></svg>
<svg style="left:1464px;top:1077px" width="15" height="22" viewBox="0 0 15 22"><rect x="3.5" y="0" width="8" height="14" rx="4" fill="#e8e8e8"/><path d="M1 9 V11 A6.5 6.5 0 0 0 14 11 V9" stroke="#e8e8e8" stroke-width="1.5" fill="none"/><path d="M7.5 17.5 V21 M3.5 21 H11.5" stroke="#e8e8e8" stroke-width="1.5"/></svg>
<svg style="left:1492px;top:1082px" width="21" height="12" viewBox="0 0 21 12"><rect x="0.8" y="0.8" width="17" height="10.4" fill="none" stroke="#e8e8e8" stroke-width="1.6"/><rect x="3" y="3" width="9" height="6" fill="#e8e8e8"/><rect x="18.6" y="3.5" width="2.2" height="5" fill="#e8e8e8"/></svg>
<svg style="left:1524px;top:1080px" width="17" height="17" viewBox="0 0 17 17"><path d="M1 16 A15 15 0 0 1 16 1" stroke="#cfcfcf" stroke-width="1.6" fill="none"/><path d="M5 16 A11 11 0 0 1 16 5" stroke="#cfcfcf" stroke-width="1.6" fill="none"/><path d="M9 16 A7 7 0 0 1 16 9" stroke="#cfcfcf" stroke-width="1.6" fill="none"/><rect x="13" y="13" width="3.5" height="3.5" fill="#e8e8e8"/></svg>
<svg style="left:1551px;top:1079px" width="21" height="19" viewBox="0 0 21 19"><path d="M1 6.5 H4.5 L9 2 V17 L4.5 12.5 H1Z" fill="none" stroke="#e8e8e8" stroke-width="1.5"/><path d="M12 6 Q14 9.5 12 13 M15 3.5 Q18.5 9.5 15 15.5 M18 1.5 Q22.5 9.5 18 17.5" stroke="#e8e8e8" stroke-width="1.4" fill="none"/></svg>
<span class="t" style="left:1584px;top:1082.2px;font-size:14.5px;letter-spacing:-1.20px;color:#e8e8e8">ENG</span>
<span class="t" style="left:1639px;top:1071.2px;font-size:14.5px;letter-spacing:-0.17px;color:#e8e8e8">2:26 PM</span>
<span class="t" style="left:1632px;top:1093.8px;font-size:14.5px;letter-spacing:0.31px;color:#e8e8e8">3/03/2021</span>
<svg style="left:1725px;top:1077px" width="22" height="22" viewBox="0 0 22 22"><path d="M1 1 H21 V17 H9 L5 21 V17 H1Z" fill="#f0f0f0"/><path d="M4.5 5.5 H17.5 M4.5 9 H17.5 M4.5 12.5 H13" stroke="#1b2a38" stroke-width="1.5"/></svg>

<!-- overlay -->
<!-- Activate Windows watermark -->
<span class="t" style="left:1421px;top:960.5px;font-size:25px;letter-spacing:-0.22px;color:rgba(120,120,120,.36)">Activate Windows</span>
<span class="t" style="left:1421px;top:992.8px;font-size:17.5px;letter-spacing:0.08px;color:rgba(120,120,120,.32)">Go to Settings to activate Windows.</span>
<!-- mouse cursor (hand) -->
<svg style="left:1066px;top:775px" width="19" height="28" viewBox="0 0 19 28"><path d="M5 15 V3 Q5 1 6.8 1 Q8.6 1 8.6 3 V11 V8.5 Q8.6 7 10.2 7 Q11.8 7 11.8 8.5 V11.5 V9.5 Q11.8 8 13.4 8 Q15 8 15 9.5 V12.5 V11 Q15 9.5 16.5 9.5 Q18 9.5 18 11 V19 Q18 27 11 27 H9 Q5 27 3.5 23 L1 17 Q0.5 15 2 14.5 Q3.5 14.2 5 16.5Z" fill="#fff" stroke="#6a6a6a" stroke-width="1.2" stroke-linejoin="round"/></svg>

</div></div>
</body>
</html>
